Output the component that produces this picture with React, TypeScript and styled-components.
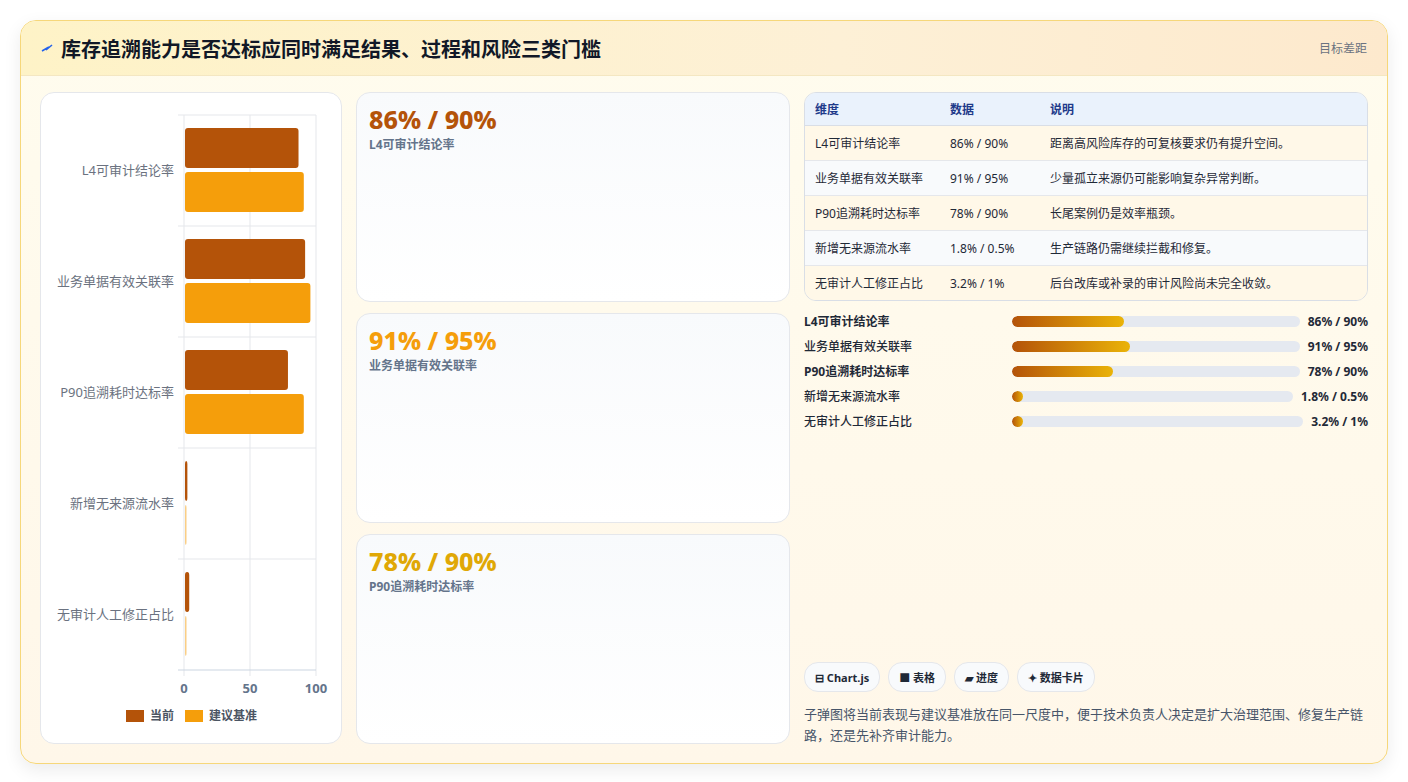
import React from "react";
import styled, { createGlobalStyle } from "styled-components";

const Global = createGlobalStyle`
  body { margin: 0; background: #f3f4f6; font-family: "Noto Sans", "Noto Sans CJK SC", sans-serif; }
`;

const Page = styled.div`
  padding: 20px 20px 18px 20px;
  height: 782px;
  box-sizing: border-box;
  background: #fff;
`;

const Card = styled.div`
  height: 744px;
  box-sizing: border-box;
  border: 1px solid #f6d77a;
  border-radius: 16px;
  background: linear-gradient(180deg, #fffcee, #fff7e9);
  box-shadow: 0 6px 18px rgba(0, 0, 0, 0.08);
  display: flex;
  flex-direction: column;
  overflow: hidden;
`;

const Header = styled.div`
  height: 55px;
  display: flex;
  align-items: center;
  justify-content: space-between;
  padding: 0 20px;
  background: linear-gradient(90deg, #fef3c7, #fdf0d6 60%, #fde9cd);
  border-bottom: 1px solid #f4e7c2;
`;

const Title = styled.h1`
  margin: 0;
  font-size: 20px;
  font-weight: 700;
  color: #111827;
  display: flex;
  align-items: center;
  gap: 8px;
`;

const Tag = styled.span`
  font-size: 12px;
  color: #6b7280;
`;

const Body = styled.div`
  flex: 1;
  display: grid;
  grid-template-columns: 302px 434px 1fr;
  gap: 14px;
  padding: 16px 19px 19px 19px;
`;

const Panel = styled.div`
  background: #fff;
  border: 1px solid #e5e7eb;
  border-radius: 14px;
`;

const Cards = styled.div`
  display: grid;
  grid-template-rows: repeat(3, 1fr);
  gap: 11px;
`;

const Stat = styled.div`
  background: linear-gradient(180deg, #f8fafc, #ffffff);
  border: 1px solid #e5e7eb;
  border-radius: 14px;
  padding: 10px 12px;
`;

const StatValue = styled.div<{ $c: string }>`
  font-size: 25px;
  font-weight: 800;
  color: ${(p) => p.$c};
  line-height: 32px;
`;

const StatLabel = styled.div`
  font-size: 12px;
  font-weight: 700;
  color: #64748b;
`;

const Right = styled.div`
  display: flex;
  flex-direction: column;
`;

const Table = styled.table`
  width: 100%;
  border-collapse: separate;
  border-spacing: 0;
  border: 1px solid #d9dee6;
  border-radius: 12px;
  overflow: hidden;
  font-size: 12px;
  color: #1f2937;
  th {
    background: #eaf2fc;
    color: #1e3a8a;
    font-weight: 700;
    text-align: left;
    height: 32px;
    padding: 0 10px;
    border-bottom: 1px solid #d9dee6;
  }
  td {
    height: 34px;
    padding: 0 10px;
    border-bottom: 1px solid #e5e7eb;
  }
  tr:last-child td { border-bottom: none; }
  tbody tr:nth-child(odd) td { background: #fff8e8; }
  tbody tr:nth-child(even) td { background: #f8fafc; }
`;

const Bars = styled.div`
  margin-top: 11px;
  display: flex;
  flex-direction: column;
  gap: 7px;
`;

const BarRow = styled.div`
  display: grid;
  grid-template-columns: 200px 1fr auto;
  align-items: center;
  gap: 8px;
  font-size: 12px;
  height: 18px;
`;

const BarLabel = styled.span<{ $b?: boolean }>`
  color: #1f2937;
  font-weight: ${(p) => (p.$b ? 700 : 500)};
`;

const Track = styled.div`
  height: 11px;
  border-radius: 6px;
  background: #e5e9f0;
  overflow: hidden;
`;

const Fill = styled.div`
  height: 100%;
  min-width: 11px;
  border-radius: 6px;
  background: linear-gradient(90deg, #b45309, #eab308);
`;

const BarValue = styled.span`
  font-weight: 700;
  color: #1f2937;
`;

const Spacer = styled.div`
  flex: 1;
`;

const Chips = styled.div`
  display: flex;
  gap: 8px;
`;

const Chip = styled.span`
  height: 28px;
  padding: 0 10px;
  border: 1px solid #e5e7eb;
  border-radius: 14px;
  background: #f8fafc;
  font-size: 11px;
  font-weight: 700;
  color: #1f2937;
  display: inline-flex;
  align-items: center;
  gap: 4px;
`;

const Note = styled.p`
  margin: 12px 0 -2px;
  font-size: 13px;
  line-height: 21px;
  color: #475569;
`;

const rows = [
  { n: "L4可审计结论率", cur: 86, base: 90, v: "86% / 90%", d: "距离高风险库存的可复核要求仍有提升空间。", w: 39, b: true },
  { n: "业务单据有效关联率", cur: 91, base: 95, v: "91% / 95%", d: "少量孤立来源仍可能影响复杂异常判断。", w: 41, b: false },
  { n: "P90追溯耗时达标率", cur: 78, base: 90, v: "78% / 90%", d: "长尾案例仍是效率瓶颈。", w: 35, b: true },
  { n: "新增无来源流水率", cur: 1.8, base: 0.5, v: "1.8% / 0.5%", d: "生产链路仍需继续拦截和修复。", w: 0, b: false },
  { n: "无审计人工修正占比", cur: 3.2, base: 1, v: "3.2% / 1%", d: "后台改库或补录的审计风险尚未完全收敛。", w: 0, b: false },
];

const Chart = () => {
  const x0 = 143, k = 1.32, top = 22, band = 111;
  return (
    <svg width="300" height="650" style={{ display: "block" }}>
      {[0, 50, 100].map((t) => (
        <line key={t} x1={x0 + t * k} x2={x0 + t * k} y1={top} y2={top + band * 5 + 6} stroke="#e5e7eb" />
      ))}
      {[0, 1, 2, 3, 4, 5].map((i) => (
        <line key={i} x1={x0 - 6} x2={x0 + 132} y1={top + i * band} y2={top + i * band} stroke={i === 5 ? "#cbd5e1" : "#e5e7eb"} />
      ))}
      {rows.map((r, i) => {
        const y = top + i * band;
        return (
          <g key={r.n}>
            <rect x={x0 + 1} y={y + 13} width={Math.max(r.cur * k, 2)} height={40} rx={3} fill="#b45309" />
            <rect x={x0 + 1} y={y + 57} width={Math.max(r.base * k, 1.5)} height={40} rx={3} fill="#f59e0b" opacity={r.base < 5 ? 0.5 : 1} />
            <text x={x0 - 10} y={y + 60} textAnchor="end" fontSize="13" fill="#6b7280">{r.n}</text>
          </g>
        );
      })}
      {[0, 50, 100].map((t) => (
        <text key={t} x={x0 + t * k} y={600} textAnchor="middle" fontSize="13" fontWeight="700" fill="#64748b">{t}</text>
      ))}
      <rect x={85} y={617} width={18} height={12} fill="#b45309" />
      <text x={109} y={627} fontSize="12" fontWeight="700" fill="#4b5563">当前</text>
      <rect x={144} y={617} width={18} height={12} fill="#f59e0b" />
      <text x={168} y={627} fontSize="12" fontWeight="700" fill="#4b5563">建议基准</text>
    </svg>
  );
};

export default function App() {
  const colors = ["#b45309", "#f59e0b", "#e0a806"];
  return (
    <Page>
      <Global />
      <Card>
        <Header>
          <Title>
            <svg width="12" height="12" viewBox="0 0 12 12"><path d="M1 9 L6 6 L5 8 L11 3" stroke="#2563eb" strokeWidth="1.6" fill="none" /></svg>
            库存追溯能力是否达标应同时满足结果、过程和风险三类门槛
          </Title>
          <Tag>目标差距</Tag>
        </Header>
        <Body>
          <Panel><Chart /></Panel>
          <Cards>
            {rows.slice(0, 3).map((r, i) => (
              <Stat key={r.n}>
                <StatValue $c={colors[i]}>{r.v}</StatValue>
                <StatLabel>{r.n}</StatLabel>
              </Stat>
            ))}
          </Cards>
          <Right>
            <Table>
              <thead>
                <tr><th style={{ width: 115 }}>维度</th><th style={{ width: 80 }}>数据</th><th>说明</th></tr>
              </thead>
              <tbody>
                {rows.map((r) => (
                  <tr key={r.n}><td>{r.n}</td><td>{r.v}</td><td>{r.d}</td></tr>
                ))}
              </tbody>
            </Table>
            <Bars>
              {rows.map((r) => (
                <BarRow key={r.n}>
                  <BarLabel $b={r.b}>{r.n}</BarLabel>
                  <Track><Fill style={{ width: `${r.w}%` }} /></Track>
                  <BarValue>{r.v}</BarValue>
                </BarRow>
              ))}
            </Bars>
            <Spacer />
            <Chips>
              <Chip>⊟ Chart.js</Chip>
              <Chip>■ 表格</Chip>
              <Chip>▰ 进度</Chip>
              <Chip>✦ 数据卡片</Chip>
            </Chips>
            <Note>子弹图将当前表现与建议基准放在同一尺度中，便于技术负责人决定是扩大治理范围、修复生产链路，还是先补齐审计能力。</Note>
          </Right>
        </Body>
      </Card>
    </Page>
  );
}
